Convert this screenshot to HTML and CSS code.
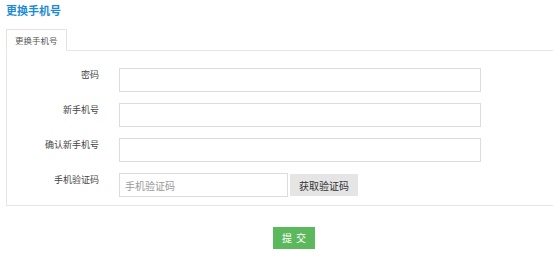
FILE: index.html
```html
<!DOCTYPE html>
<html lang="zh-CN">
<head>
<meta charset="utf-8">
<title>更换手机号</title>
<link rel="stylesheet" href="styles.css">
</head>
<body>
<div class="page">
  <h1 class="title">更换手机号</h1>
  <div class="tabs">
    <div class="tab active">更换手机号</div>
  </div>
  <div class="panel">
    <form class="form">
      <div class="row">
        <label class="label">密码</label>
        <input class="input" type="password">
      </div>
      <div class="row">
        <label class="label">新手机号</label>
        <input class="input" type="text">
      </div>
      <div class="row">
        <label class="label">确认新手机号</label>
        <input class="input" type="text">
      </div>
      <div class="row">
        <label class="label">手机验证码</label>
        <div class="code-group">
          <input class="input short" type="text" placeholder="手机验证码">
          <button class="code-btn" type="button">获取验证码</button>
        </div>
      </div>
    </form>
  </div>
  <div class="actions">
    <button class="submit" type="button">提 交</button>
  </div>
</div>
</body>
</html>
```

FILE: styles.css
```css
* { box-sizing: border-box; }
html, body {
  margin: 0;
  padding: 0;
  background: #fff;
  overflow: hidden;
}
body {
  font-family: "Noto Sans CJK SC", "Noto Sans", "Liberation Sans", sans-serif;
  color: #333;
}
.page {
  padding: 3px 0 0 6px;
}
.title {
  margin: 0;
  font-size: 11px;
  line-height: 14px;
  font-weight: bold;
  color: #1b8bd6;
}
.tabs {
  display: flex;
  margin-top: 12px;
}
.tab {
  height: 22px;
  padding: 0 8px;
  font-size: 8.5px;
  line-height: 21px;
  color: #555;
  border: 1px solid #e3e3e3;
  border-bottom: 1px solid #fff;
  background: #fff;
  margin-bottom: -1px;
  position: relative;
  z-index: 1;
}
.panel {
  border: 1px solid #e6e6e6;
  border-right: none;
  padding: 17px 0 8px 0;
}
.form {
  display: flex;
  flex-direction: column;
  gap: 11px;
}
.row {
  display: flex;
  align-items: flex-start;
}
.label {
  width: 92px;
  flex: none;
  text-align: right;
  font-size: 9px;
  line-height: 14px;
  color: #444;
  margin-right: 20px;
}
.input {
  width: 362px;
  height: 24px;
  border: 1px solid #dcdcdc;
  padding: 0 5px;
  font-size: 10px;
  font-family: inherit;
  color: #333;
  outline: none;
  background: #fff;
}
.input::placeholder {
  color: #9a9a9a;
}
.code-group {
  display: flex;
  gap: 2px;
}
.input.short {
  width: 169px;
}
.code-btn {
  width: 68px;
  height: 22px;
  margin-top: 1px;
  border: none;
  background: #e5e5e5;
  color: #333;
  font-size: 10px;
  font-family: inherit;
  padding: 0;
}
.actions {
  padding: 17px 0 0 267px;
}
.submit {
  width: 42px;
  height: 22px;
  border: none;
  background: #5cb85c;
  color: #fff;
  font-size: 10px;
  font-family: inherit;
  padding: 0;
  word-spacing: 2px;
}
```
